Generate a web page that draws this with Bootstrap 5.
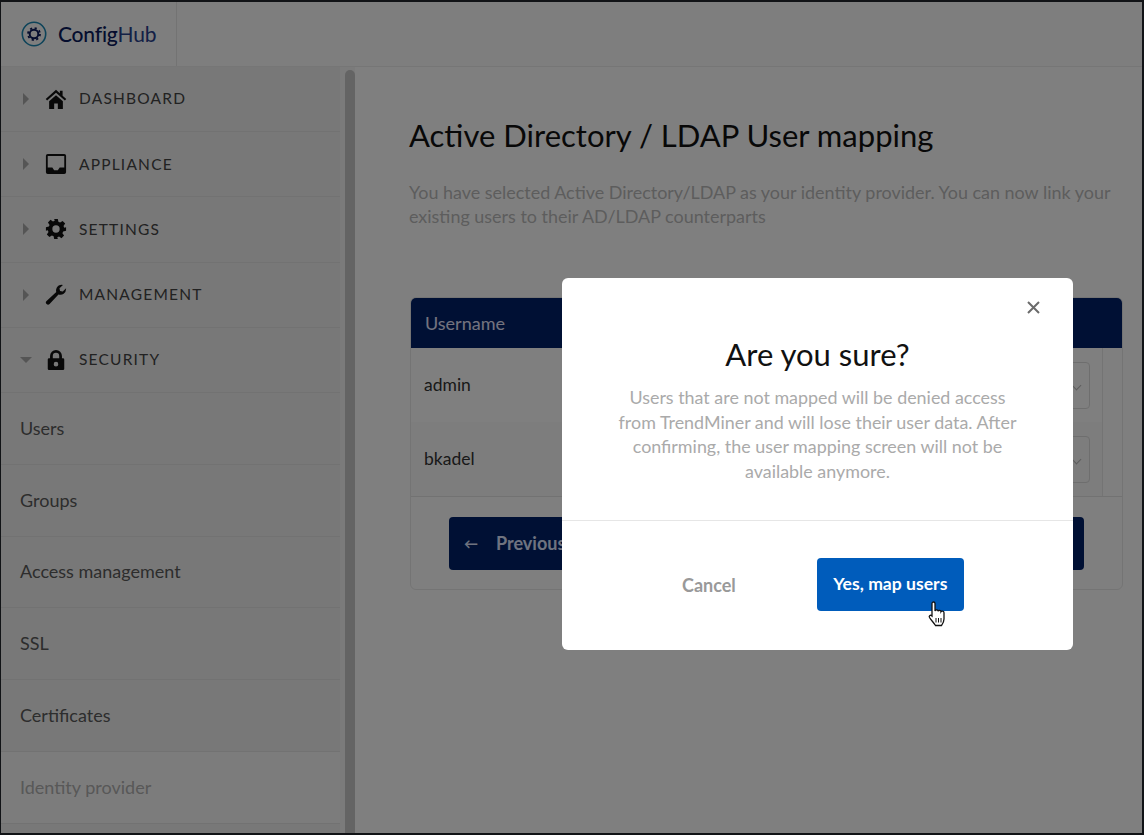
<!DOCTYPE html>
<html lang="en"><head><meta charset="utf-8"><title>ConfigHub</title>
<link href="https://cdn.jsdelivr.net/npm/bootstrap@5.3.0/dist/css/bootstrap.min.css" rel="stylesheet">
<style>
html,body{height:100%;overflow:hidden}
body{font-family:Lato,"Liberation Sans",sans-serif;background:#fff;color:#222;border-style:solid;border-color:#23262d;border-width:2px 2px 2px 1px;display:flex;flex-direction:column}
.top-bar{height:65px;flex:none;background:#fdfdfd;border-bottom:1px solid #ececec}
.brand-box{width:176px;border-right:1px solid #e6e6e6;padding-left:20px;gap:11px}
.brand-name{font-size:21px;color:#0a1a5c;font-weight:500;letter-spacing:-.2px}
.brand-name span{color:#28408c;font-weight:400}
.shell{flex:1;min-height:0}
.side-nav{width:339px;flex:none;background:#f1f1f1;overflow:hidden}
.nav-row{height:65.2px;border-bottom:1px solid #e5e5e5;padding-left:22px;color:#444;letter-spacing:1.2px;font-size:15.5px}
.caret-r{width:0;height:0;border-style:solid;border-width:6px 0 6px 6px;border-color:transparent transparent transparent #aaa;margin-right:16px}
.caret-d{width:0;height:0;border-style:solid;border-width:6px 6px 0 6px;border-color:#aaa transparent transparent transparent;margin:0 13px 0 -3px}
.nav-ico{width:22px;height:22px;margin-right:12px;flex:none;fill:#111}
.sub-row{height:71.8px;border-bottom:1px solid #e5e5e5;padding-left:19px;font-size:18px;color:#5a5a5a}
.sub-active{background:#f9f9f9;color:#b0b0b0}
.track{width:15px;flex:none;background:#f6f6f6;padding:3px 0 0 5px}
.thumb{height:100%;background:#c8c8c8;border-radius:5px 5px 0 0}
.main-area{flex:1;min-width:0;background:#fff;padding:47px 19px 0 54px}
.page-title{font-size:31px;font-weight:400;line-height:42px;color:#111;margin:0 0 24px}
.page-sub{font-size:17.95px;line-height:24px;color:#bbb;margin:0 0 69px}
.map-card{border-color:#e8e8e8;border-radius:6px;height:293px;overflow:hidden;margin-left:1px}
.map-head{height:50px;flex:none;background:#002069;color:#e7e7ff;padding-left:14px;font-size:18px}
.map-row{height:74px;flex:none;padding-left:13px;font-size:17.5px;color:#333;border-right:1px solid #e8e8e8;margin-right:19px}
.row-shade{background:#fafafa}
.row-rule{border-bottom:1px solid #e4e4e4;height:0;flex:none}
.fake-select{width:60px;height:47px;border:1px solid #ddd;border-radius:4px;margin-right:12px;margin-left:auto;padding-right:9px}
.select-arrow{width:7px;height:7px;border-right:1px solid #bbb;border-bottom:1px solid #bbb;transform:rotate(45deg)}
.map-foot{padding:20px 38px 20px}
.navy-btn{height:53px;background:#002069;color:#dfe6ff;border:0;border-radius:4px;font-weight:700;font-size:18px;padding:0 28px 0 15px;gap:18px}
.back-arrow{font-size:14px;font-weight:700}
.page-dim{position:fixed;inset:0;background:rgba(0,0,0,.5);z-index:10}
.confirm{position:fixed;left:562px;top:278px;width:511px;height:372px;z-index:20;border:0;border-radius:6px}
.confirm-x{position:absolute;right:33px;top:23px;color:#6b6b6b;background:none;border:0;padding:0;line-height:0}
.confirm-body{height:243px;padding:55px 50px 0;text-align:center;border-bottom:1px solid #e6e6e6}
.confirm-title{font-size:31px;font-weight:400;line-height:42px;color:#111;margin:0 0 10px}
.confirm-text{font-size:17.9px;line-height:24.6px;color:#aaa;margin:0}
.confirm-foot{flex:1;padding-top:37px;padding-left:120px;gap:81px}
.cancel-link{font-size:18px;font-weight:700;color:#999;border:0;background:none;padding:0;margin-top:14px}
.map-go{width:147px;height:53px;background:#005cbb;color:#fff;border:0;border-radius:4px;font-size:17.6px;font-weight:700;padding:0}
.pointer{position:fixed;left:927px;top:601px;z-index:30}
</style></head>
<body>
<header class="top-bar d-flex">
  <div class="brand-box d-flex align-items-center h-100">
    <svg width="26" height="26" viewBox="0 0 26 26"><circle cx="13" cy="13" r="11.7" fill="none" stroke="#1b87b3" stroke-width="1.6"/><circle cx="13" cy="13" r="4.3" fill="none" stroke="#0a1a5c" stroke-width="2"/><circle cx="13" cy="13" r="6" fill="none" stroke="#0a1a5c" stroke-width="1.8" stroke-dasharray="2.2 2.5"/></svg>
    <div class="brand-name">Config<span>Hub</span></div>
  </div>
</header>
<div class="shell d-flex">
  <nav class="side-nav">
    <div class="nav-row d-flex align-items-center"><i class="caret-r"></i><svg class="nav-ico" viewBox="0 0 24 24"><path d="M12 2 0.8 12l1.5 1.7L12 5.2l9.7 8.5 1.5-1.7-4-3.6V3h-3v2.6zM4.5 14.5V23h5.5v-6h4v6h5.5v-8.5L12 8z"/></svg>DASHBOARD</div>
    <div class="nav-row d-flex align-items-center"><i class="caret-r"></i><svg class="nav-ico" viewBox="0 0 24 24"><path fill-rule="evenodd" d="M3 1h18a2 2 0 0 1 2 2v18a2 2 0 0 1-2 2H3a2 2 0 0 1-2-2V3a2 2 0 0 1 2-2zm0 2.2v12.6h5l2 3h4l2-3h5V3.2z"/></svg>APPLIANCE</div>
    <div class="nav-row d-flex align-items-center"><i class="caret-r"></i><svg class="nav-ico" viewBox="0 0 24 24"><path fill-rule="evenodd" d="M10 1h4l.6 3.2 1.9.8 2.7-1.8 2.8 2.8-1.8 2.7.8 1.9L23 10v4l-3.2.6-.8 1.9 1.8 2.7-2.8 2.8-2.7-1.8-1.9.8L14 23h-4l-.6-3.2-1.9-.8-2.7 1.8L2 18l1.8-2.7-.8-1.9L1 14v-4l3.2-.6.8-1.9L3.2 4.8 6 2l2.7 1.8 1.9-.8zM12 8a4 4 0 1 0 0 8 4 4 0 0 0 0-8z"/></svg>SETTINGS</div>
    <div class="nav-row d-flex align-items-center"><i class="caret-r"></i><svg class="nav-ico" viewBox="0 0 24 24"><path d="M23 5.500a6.200 6.200 0 0 1-8.300 5.900L5 21.800a2.300 2.300 0 0 1-3.300.1 2.300 2.300 0 0 1 0-3.300l10.600-9.800A6.200 6.200 0 0 1 19.600 1l-3.800 3.600.6 3 3 .7L23 4.600z"/></svg>MANAGEMENT</div>
    <div class="nav-row d-flex align-items-center"><i class="caret-d"></i><svg class="nav-ico" viewBox="0 0 24 24"><path fill-rule="evenodd" d="M12 1a6.500 6.500 0 0 1 6.500 6.500V10H20a1.500 1.500 0 0 1 1 1.500v10A1.500 1.500 0 0 1 20 23H4a1.500 1.500 0 0 1-1-1.500v-10A1.500 1.500 0 0 1 4 10h1.500V7.500A6.500 6.500 0 0 1 12 1zm0 3a3.500 3.500 0 0 0-3.500 3.500V10h7V7.500A3.500 3.500 0 0 0 12 4zm0 10a2.500 2.500 0 1 0 0 5 2.500 2.500 0 0 0 0-5z"/></svg>SECURITY</div>
    <div class="sub-row d-flex align-items-center">Users</div>
    <div class="sub-row d-flex align-items-center">Groups</div>
    <div class="sub-row d-flex align-items-center">Access management</div>
    <div class="sub-row d-flex align-items-center">SSL</div>
    <div class="sub-row d-flex align-items-center">Certificates</div>
    <div class="sub-row sub-active d-flex align-items-center">Identity provider</div>
  </nav>
  <div class="track"><div class="thumb"></div></div>
  <main class="main-area">
    <h1 class="page-title">Active Directory / LDAP User mapping</h1>
    <p class="page-sub">You have selected Active Directory/LDAP as your identity provider. You can now link your existing users to their AD/LDAP counterparts</p>
    <div class="card map-card">
      <div class="map-head d-flex align-items-center">Username</div>
      <div class="map-row d-flex align-items-center">admin<div class="fake-select d-flex align-items-center justify-content-end"><div class="select-arrow"></div></div></div>
      <div class="map-row row-shade d-flex align-items-center">bkadel<div class="fake-select d-flex align-items-center justify-content-end"><div class="select-arrow"></div></div></div>
      <div class="row-rule"></div>
      <div class="map-foot d-flex justify-content-between">
        <button class="navy-btn d-flex align-items-center"><span class="back-arrow">←</span>Previous</button>
        <button class="navy-btn d-flex align-items-center">Next</button>
      </div>
    </div>
  </main>
</div>
<div class="page-dim"></div>
<div class="card confirm d-flex flex-column">
  <button class="confirm-x" aria-label="Close"><svg width="13" height="13" viewBox="0 0 13 13"><path d="M1 1l11 11M12 1 1 12" stroke="currentColor" stroke-width="2"/></svg></button>
  <div class="confirm-body">
    <h2 class="confirm-title">Are you sure?</h2>
    <p class="confirm-text">Users that are not mapped will be denied access from TrendMiner and will lose their user data. After confirming, the user mapping screen will not be available anymore.</p>
  </div>
  <div class="confirm-foot d-flex align-items-start">
    <button class="cancel-link">Cancel</button>
    <button class="map-go">Yes, map users</button>
  </div>
</div>
<svg class="pointer" width="22" height="26" viewBox="0 0 22 26"><path d="M5 2.500c0-2 3-2 3 0V10c.5-1.500 3-1.500 3 .2.500-1.200 3-1.200 3 .5.600-1 3-.8 3 1V18c0 3-1.500 5-2.500 6.500H8.500C7 22 4 19 2.500 16.500c-1-1.800 1-3 2.500-1.500z" fill="#fff" stroke="#111" stroke-width="1.300"/><path d="M9 17v4.500M11.500 17v4.500M14 17v4.500" stroke="#111" stroke-width="1"/></svg>
</body></html>
